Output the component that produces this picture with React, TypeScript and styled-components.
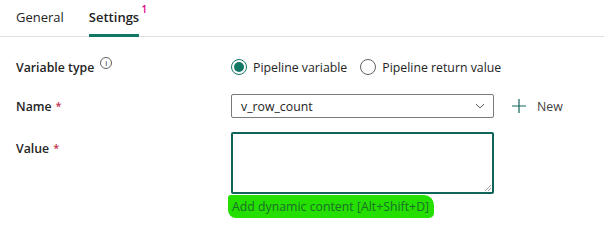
import styled, { createGlobalStyle } from "styled-components";

const GlobalStyle = createGlobalStyle`
  body {
    margin: 0;
    background: #ffffff;
    font-family: "Open Sans", "Noto Sans", sans-serif;
    color: #242424;
  }
`;

const Page = styled.div`
  width: 604px;
  height: 249px;
  overflow: hidden;
  background: #fff;
`;

const TabBar = styled.div`
  display: flex;
  gap: 25px;
  padding: 0 16px;
  height: 36px;
  border-bottom: 1px solid #e0e0e0;
`;

const Tab = styled.div<{ $active?: boolean }>`
  position: relative;
  display: flex;
  align-items: center;
  font-size: 13px;
  font-weight: ${p => (p.$active ? 600 : 400)};
  color: #242424;
  border-bottom: 3px solid ${p => (p.$active ? "#117865" : "transparent")};
  margin-bottom: -1px;
`;

const Badge = styled.span`
  position: absolute;
  top: 3px;
  right: -8px;
  font-size: 10px;
  line-height: 12px;
  font-weight: 600;
  color: #e3008c;
`;

const Form = styled.div`
  padding: 17px 0 0 16px;
  display: grid;
  grid-template-columns: 215px auto;
  grid-template-rows: 26px 24px 62px;
  row-gap: 14px;
`;

const Label = styled.div<{ $top?: boolean }>`
  font-size: 12.3px;
  font-weight: 600;
  color: #242424;
  display: flex;
  align-items: center;
  align-self: ${p => (p.$top ? "start" : "center")};
  padding-top: ${p => (p.$top ? "8px" : "0")};
`;

const Required = styled.span`
  color: #c4314b;
  font-size: 11px;
  margin-left: 4px;
  align-self: flex-start;
`;

const Info = styled.span`
  display: inline-flex;
  width: 10px;
  height: 10px;
  border: 1px solid #616161;
  border-radius: 50%;
  font-size: 8px;
  line-height: 10px;
  justify-content: center;
  font-weight: 400;
  margin-left: 6px;
  margin-top: -8px;
`;

const RadioGroup = styled.div`
  display: flex;
  gap: 13px;
  align-items: center;
`;

const RadioOption = styled.label`
  display: flex;
  align-items: center;
  gap: 6px;
  font-size: 12.3px;
`;

const RadioCircle = styled.span<{ $checked?: boolean }>`
  width: 14px;
  height: 14px;
  border-radius: 50%;
  border: 1px solid ${p => (p.$checked ? "#117865" : "#616161")};
  display: flex;
  align-items: center;
  justify-content: center;
  &::after {
    content: "";
    width: 10px;
    height: 10px;
    border-radius: 50%;
    background: ${p => (p.$checked ? "#117865" : "transparent")};
  }
`;

const Row = styled.div`
  display: flex;
  align-items: center;
  gap: 18px;
`;

const Select = styled.div`
  width: 263px;
  height: 24px;
  box-sizing: border-box;
  border: 1px solid #7a7a7a;
  border-radius: 2px;
  display: flex;
  align-items: center;
  justify-content: space-between;
  padding: 0 8px 0 9px;
  font-size: 12.3px;
`;

const NewButton = styled.div`
  display: flex;
  align-items: center;
  gap: 11px;
  font-size: 12.3px;
  color: #424242;
`;

const ValueCol = styled.div`
  display: flex;
  flex-direction: column;
  align-items: flex-start;
`;

const TextArea = styled.div`
  position: relative;
  width: 263px;
  height: 62px;
  flex-shrink: 0;
  box-sizing: border-box;
  border: 2px solid #10655a;
  border-radius: 2px;
`;

const Grip = styled.svg`
  position: absolute;
  right: 1px;
  bottom: 1px;
`;

const Highlight = styled.span`
  margin-top: 1px;
  margin-left: -3px;
  padding: 3px 5px 3px 4px;
  background: #24df00;
  border-radius: 3px 10px 5px 8px;
  font-size: 12.3px;
  color: #1c6f2a;
`;

export default function App() {
  return (
    <Page>
      <GlobalStyle />
      <TabBar>
        <Tab>General</Tab>
        <Tab $active>
          Settings<Badge>1</Badge>
        </Tab>
      </TabBar>
      <Form>
        <Label>
          Variable type<Info>i</Info>
        </Label>
        <RadioGroup>
          <RadioOption>
            <RadioCircle $checked />
            Pipeline variable
          </RadioOption>
          <RadioOption>
            <RadioCircle />
            Pipeline return value
          </RadioOption>
        </RadioGroup>

        <Label>
          Name<Required>*</Required>
        </Label>
        <Row>
          <Select>
            v_row_count
            <svg width="10" height="6" viewBox="0 0 10 6">
              <path d="M1 1l4 4 4-4" fill="none" stroke="#616161" strokeWidth="1" />
            </svg>
          </Select>
          <NewButton>
            <svg width="14" height="14" viewBox="0 0 14 14">
              <path d="M7 0v14M0 7h14" stroke="#10655a" strokeWidth="1.2" />
            </svg>
            New
          </NewButton>
        </Row>

        <Label $top>
          Value<Required>*</Required>
        </Label>
        <ValueCol>
          <TextArea>
            <Grip width="7" height="7" viewBox="0 0 7 7">
              <path d="M7 1L1 7M7 4L4 7" stroke="#888" strokeWidth="0.8" />
            </Grip>
          </TextArea>
          <Highlight>Add dynamic content [Alt+Shift+D]</Highlight>
        </ValueCol>
      </Form>
    </Page>
  );
}
